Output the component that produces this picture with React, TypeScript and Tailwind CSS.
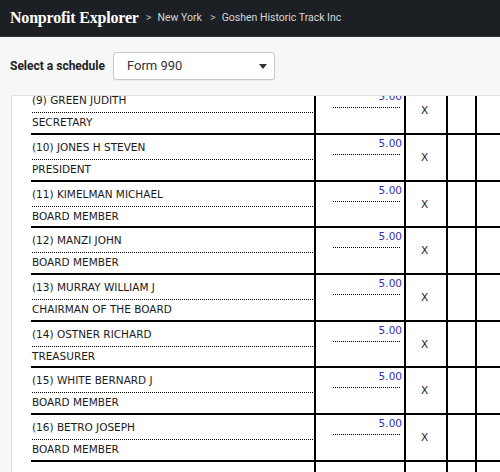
const officers = [
  { name: "(9) GREEN JUDITH", title: "SECRETARY" },
  { name: "(10) JONES H STEVEN", title: "PRESIDENT" },
  { name: "(11) KIMELMAN MICHAEL", title: "BOARD MEMBER" },
  { name: "(12) MANZI JOHN", title: "BOARD MEMBER" },
  { name: "(13) MURRAY WILLIAM J", title: "CHAIRMAN OF THE BOARD" },
  { name: "(14) OSTNER RICHARD", title: "TREASURER" },
  { name: "(15) WHITE BERNARD J", title: "BOARD MEMBER" },
  { name: "(16) BETRO JOSEPH", title: "BOARD MEMBER" },
  { name: "", title: "" },
];

function OfficerRow({ name, title }: { name: string; title: string }) {
  return (
    <div className="ml-[19px] flex h-[46.7px] border-b-2 border-black">
      <div className="w-[285px] shrink-0 border-r-2 border-black pl-[1px]">
        <div className="h-[12px] pt-[6px] leading-[12px] box-content">{name}</div>
        <div className="mt-[6px] mr-[1px] h-0 border-t border-dotted border-black" />
        <div className="pt-[3px] leading-[12px] h-[12px] box-content">{title}</div>
      </div>
      <div className="w-[90px] shrink-0 border-r-2 border-black">
        {name && (
          <>
            <div className="pt-[2px] pr-[2px] text-right leading-[12px] text-[#2f2fb0]">5.00</div>
            <div className="mt-[5px] ml-auto mr-[4px] w-[67px] h-0 border-t border-dotted border-black" />
          </>
        )}
      </div>
      <div className="w-[42px] shrink-0 border-r-2 border-black flex items-center justify-center pr-[3px]">
        {name && <span className="mt-[1px]">X</span>}
      </div>
      <div className="w-[29px] shrink-0 border-r-2 border-black" />
      <div className="flex-1" />
    </div>
  );
}

function App() {
  return (
    <div className="w-[500px] h-[472px] overflow-hidden bg-[#f6f7f7] flex flex-col font-['Roboto',sans-serif]">
      <header className="h-[37px] shrink-0 bg-[#1c1f24] border-b border-[#2c3036] flex items-center px-[10px] gap-[6px]">
        <span className="font-['Liberation_Serif',serif] font-bold text-[16px] text-white tracking-[-0.2px] mr-[1px]">
          Nonprofit Explorer
        </span>
        <span className="text-[#b9bcc0] text-[11px]">&gt;</span>
        <span className="text-[#d6d8db] text-[10.5px] mr-[2px]">New York</span>
        <span className="text-[#b9bcc0] text-[11px]">&gt;</span>
        <span className="text-[#d6d8db] text-[10.5px]">Goshen Historic Track Inc</span>
      </header>

      <div className="h-[58px] shrink-0 flex items-center px-[10px] gap-[8px] pb-[1px]">
        <span className="font-bold text-[12px] text-[#222]">Select a schedule</span>
        <div className="w-[162px] h-[28px] bg-white border border-[#c9c9c9] rounded-[3px] flex items-center pl-[13px] pr-[7px] shadow-[0_1px_1px_rgba(0,0,0,0.04)]">
          <span className="flex-1 text-[13px] text-[#333]">Form 990</span>
          <svg width="8" height="5" viewBox="0 0 8 5" className="mt-[1px]">
            <path d="M0 0 L8 0 L4 5 Z" fill="#333" />
          </svg>
        </div>
      </div>

      <div className="ml-[11px] flex-1 bg-white border-t border-l border-[#e3e3e3] overflow-hidden font-['DejaVu_Sans',Verdana,sans-serif] text-[10.5px] text-[#1a1a1a]">
        <div className="mt-[-7.7px]">
          {officers.map((o, i) => (
            <OfficerRow key={i} name={o.name} title={o.title} />
          ))}
        </div>
      </div>
    </div>
  );
}

export default App;
